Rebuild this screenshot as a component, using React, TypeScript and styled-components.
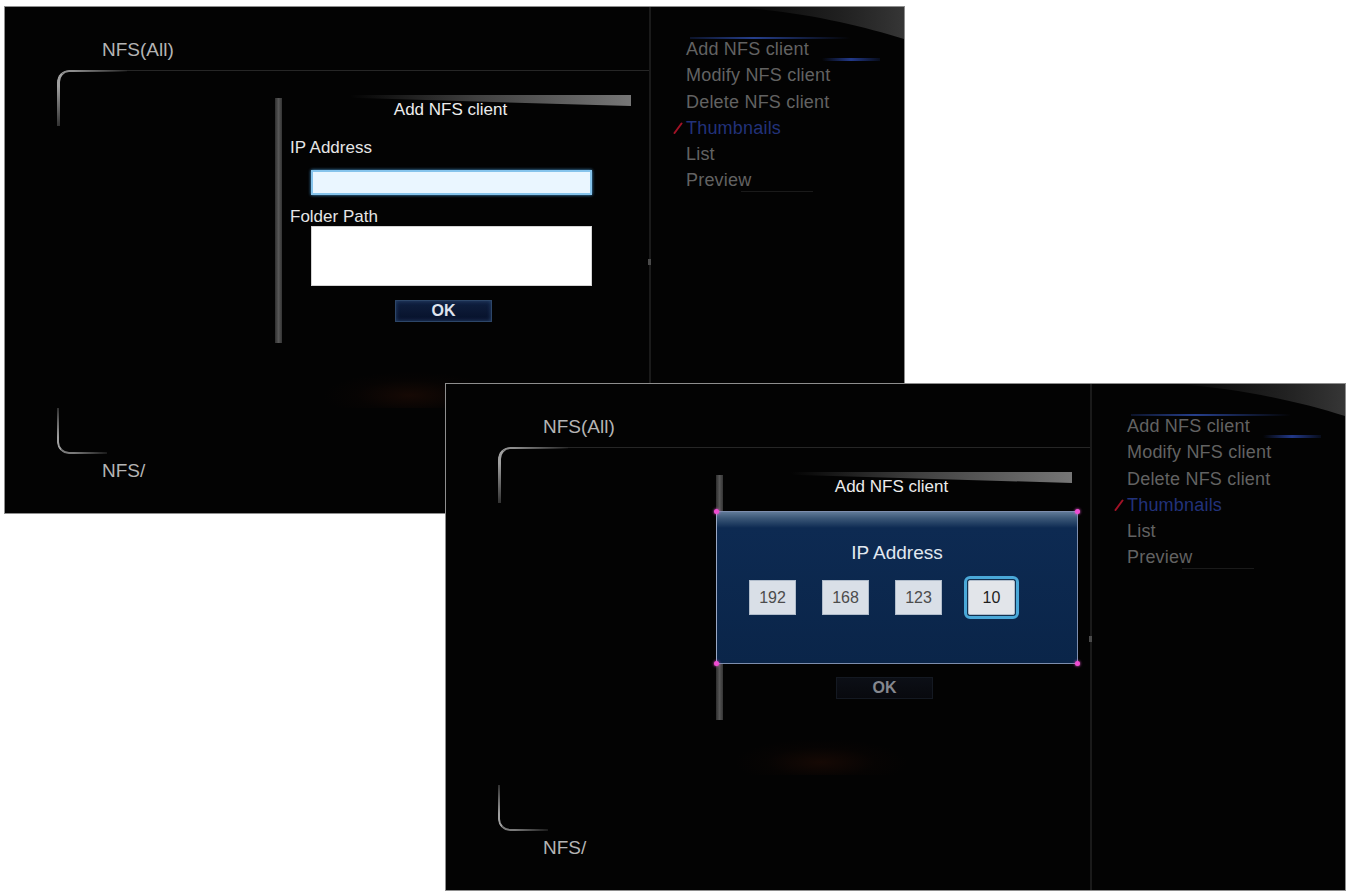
import React from 'react';
import styled, { createGlobalStyle } from 'styled-components';

const GlobalStyle = createGlobalStyle`
  html, body {
    margin: 0;
    background: #ffffff;
  }
  body {
    width: 1351px;
    height: 893px;
    overflow: hidden;
    font-family: "Liberation Sans", Arial, sans-serif;
  }
`;

const Stage = styled.div`
  position: relative;
  width: 1351px;
  height: 893px;
`;

// each screenshot is a window laid on the white canvas
const Shot = styled.div<{ $x: number; $y: number }>`
  position: absolute;
  left: ${(p) => p.$x}px;
  top: ${(p) => p.$y}px;
  width: 901px;
  height: 508px;
  box-sizing: border-box;
  border: 1px solid #8e8e8e;
  background: #030303;
  display: flex;
  overflow: hidden;
`;

const LeftPane = styled.div`
  position: relative;
  width: 644px;
  flex: none;
  padding-top: 32px;
  box-sizing: border-box;
`;

const PathLabel = styled.div`
  padding-left: 97px;
  font-size: 19px;
  line-height: 22px;
  color: #b4b4b4;
`;

const Frame = styled.div`
  position: relative;
  margin: 9px 0 6px 52px;
  height: 384px;
  box-sizing: border-box;
  border-top: 1px solid #262626;
  border-top-left-radius: 12px;
  padding: 24px 0 0 218px;
`;

// bright bevel that shows only at the left corners of the frame
const FrameCorner = styled.span<{ $edge: 'top' | 'bottom' }>`
  position: absolute;
  left: 0;
  ${(p) => (p.$edge === 'top' ? 'top: -1px;' : 'bottom: 0;')}
  width: ${(p) => (p.$edge === 'top' ? 70 : 50)}px;
  height: ${(p) => (p.$edge === 'top' ? 56 : 46)}px;
  box-sizing: border-box;
  border-left: ${(p) => (p.$edge === 'top' ? 3 : 2)}px solid #a0a0a0;
  ${(p) =>
    p.$edge === 'top'
      ? 'border-top: 2px solid #8e8e8e; border-top-left-radius: 12px;'
      : 'border-bottom: 2px solid #7a7a7a; border-bottom-left-radius: 12px;'}
  -webkit-mask-image: ${(p) =>
    p.$edge === 'top'
      ? 'radial-gradient(circle at 0 0, #000 18%, transparent 82%)'
      : 'radial-gradient(circle at 0 100%, #000 25%, transparent 85%)'};
  mask-image: ${(p) =>
    p.$edge === 'top'
      ? 'radial-gradient(circle at 0 0, #000 18%, transparent 82%)'
      : 'radial-gradient(circle at 0 100%, #000 25%, transparent 85%)'};
`;

const Glow = styled.div<{ $x: number; $y: number }>`
  position: absolute;
  left: ${(p) => p.$x}px;
  top: ${(p) => p.$y}px;
  width: 170px;
  height: 36px;
  background: radial-gradient(ellipse at 50% 65%, rgba(70, 24, 8, 0.28), rgba(30, 10, 4, 0.12) 45%, transparent 72%);
  pointer-events: none;
`;

const Dialog = styled.div`
  display: flex;
  width: 356px;
`;

const DialogRail = styled.div`
  width: 7px;
  height: 245px;
  margin-top: 3px;
  flex: none;
  background: linear-gradient(to right, #2e2e2e, #565656 50%, #343434);
`;

const DialogBody = styled.div`
  flex: 1;
  display: flex;
  flex-direction: column;
  padding-left: 8px;
`;

const DialogHeader = styled.div`
  position: relative;
  height: 30px;
  line-height: 30px;
  text-align: center;
  padding-right: 20px;
  font-size: 17px;
  color: #ececec;

  &::before {
    content: '';
    position: absolute;
    top: 0;
    left: 60px;
    right: 0;
    height: 11px;
    background: linear-gradient(to right, rgba(90, 90, 90, 0), #404040 45%, #767676);
    clip-path: polygon(0 0, 100% 0, 100% 100%, 0 25%);
  }
`;

const FieldLabel = styled.div<{ $gap: number; $covered: boolean }>`
  margin-top: ${(p) => p.$gap}px;
  font-size: 17px;
  line-height: 18px;
  color: #e6e6e6;
  visibility: ${(p) => (p.$covered ? 'hidden' : 'visible')};
`;

const IpInput = styled.div<{ $focused: boolean }>`
  margin: 13px 0 0 21px;
  width: 281px;
  height: 25px;
  box-sizing: border-box;
  background: ${(p) => (p.$focused ? '#eaf6ff' : '#ffffff')};
  border: 2px solid ${(p) => (p.$focused ? '#86c4ec' : '#d8d8d8')};
  box-shadow: ${(p) => (p.$focused ? '0 0 3px #4a9fdc' : 'none')};
`;

const PathInput = styled.div`
  margin: 0 0 0 21px;
  width: 281px;
  height: 60px;
  background: #ffffff;
  border: 1px solid #d4d4d4;
  box-sizing: border-box;
`;

const OkButton = styled.div<{ $focused: boolean }>`
  margin: 14px 0 0 105px;
  width: 97px;
  height: 22px;
  box-sizing: border-box;
  text-align: center;
  font-size: 16px;
  font-weight: bold;
  line-height: 20px;
  color: ${(p) => (p.$focused ? '#dfe3ee' : '#85888f')};
  background: ${(p) =>
    p.$focused ? 'linear-gradient(#0f1f3e, #07112a)' : 'linear-gradient(#0c0f16, #08090e)'};
  border: 1px solid ${(p) => (p.$focused ? '#2d4668' : '#141922')};
  box-shadow: ${(p) => (p.$focused ? 'inset 0 0 4px #28446e' : 'none')};
`;

const Divider = styled.div`
  position: relative;
  width: 2px;
  flex: none;
  background: #1a1a1a;

  &::after {
    content: '';
    position: absolute;
    left: -1px;
    top: 252px;
    width: 3px;
    height: 6px;
    background: #4a4a4a;
  }
`;

const Menu = styled.ul`
  list-style: none;
  margin: 0;
  padding: 29px 0 0 35px;
  display: flex;
  flex-direction: column;
`;

const MenuItem = styled.li<{ $active?: boolean; $selected?: boolean; $underline?: boolean }>`
  position: relative;
  width: 196px;
  height: 26.3px;
  line-height: 26px;
  font-size: 18px;
  letter-spacing: 0.2px;
  color: ${(p) => (p.$selected ? '#22327a' : '#626262')};

  ${(p) =>
    p.$active &&
    `
    &::before {
      content: '';
      position: absolute;
      top: 1px;
      left: 4px;
      width: 160px;
      height: 2px;
      background: linear-gradient(to right, rgba(40,70,160,0.25), #263f8c 40%, rgba(40,70,160,0));
    }
    &::after {
      content: '';
      position: absolute;
      top: 22px;
      left: 136px;
      width: 58px;
      height: 3px;
      background: linear-gradient(to right, rgba(30,60,150,0), #22398a 50%, rgba(30,60,150,0.15));
    }
  `}

  ${(p) =>
    p.$underline &&
    `
    &::after {
      content: '';
      position: absolute;
      top: 24px;
      left: 55px;
      width: 72px;
      height: 1px;
      background: #1a1a1a;
    }
  `}
`;

const Tick = styled.svg`
  position: absolute;
  left: -13px;
  top: 7px;
`;

const Swoosh = styled.svg`
  position: absolute;
  top: 0;
  right: 0;
`;

const IpPopup = styled.div`
  position: absolute;
  left: 270px;
  top: 127px;
  width: 362px;
  height: 153px;
  box-sizing: border-box;
  border: 1px solid #7d8eae;
  border-left-color: #9aa8c4;
  background: linear-gradient(#607a98 0, #3c5878 6px, #0d2a52 16px, #0a2549 100%);
  display: flex;
  flex-direction: column;
  align-items: center;
`;

const CornerDot = styled.span<{ $v: 'top' | 'bottom'; $h: 'left' | 'right' }>`
  position: absolute;
  ${(p) => p.$v}: -3px;
  ${(p) => p.$h}: -3px;
  width: 5px;
  height: 5px;
  border-radius: 50%;
  background: #f04cd2;
  box-shadow: 0 0 3px #ff5ee0;
`;

const PopupTitle = styled.div`
  margin-top: 30px;
  font-size: 19px;
  line-height: 22px;
  color: #e2e8f0;
`;

const OctetRow = styled.div`
  align-self: flex-start;
  display: flex;
  gap: 26px;
  margin: 16px 0 0 32px;
`;

const Octet = styled.div<{ $focused?: boolean }>`
  width: 47px;
  height: 35px;
  box-sizing: border-box;
  display: flex;
  align-items: center;
  justify-content: center;
  font-size: 16px;
  color: ${(p) => (p.$focused ? '#1e1e1e' : '#4c4c4c')};
  background: ${(p) => (p.$focused ? '#e2e5ea' : '#d9dfe7')};
  border: 1px solid #b0bccb;
  ${(p) =>
    p.$focused &&
    `
    outline: 3px solid #4aa8d8;
    outline-offset: 1px;
    border-radius: 2px;
    box-shadow: 0 0 0 1px #12304f;
  `}
`;

const menuItems = [
  'Add NFS client',
  'Modify NFS client',
  'Delete NFS client',
  'Thumbnails',
  'List',
  'Preview',
];

const octets = ['192', '168', '123', '10'];

const Screen = ({ x, y, popup }: { x: number; y: number; popup: boolean }) => (
  <Shot $x={x} $y={y}>
    <LeftPane>
      <PathLabel>NFS(All)</PathLabel>
      <Frame>
        <FrameCorner $edge="top" />
        <FrameCorner $edge="bottom" />
        <Dialog>
          <DialogRail />
          <DialogBody>
            <DialogHeader>Add NFS client</DialogHeader>
            {/* the IP popup covers these fields in the second shot */}
            <FieldLabel $gap={14} $covered={popup}>IP Address</FieldLabel>
            <IpInput $focused={!popup} />
            <FieldLabel $gap={13} $covered={popup}>Folder Path</FieldLabel>
            <PathInput />
            <OkButton $focused={!popup}>OK</OkButton>
          </DialogBody>
        </Dialog>
      </Frame>
      <PathLabel>NFS/</PathLabel>
      <Glow $x={popup ? 290 : 320} $y={popup ? 355 : 365} />
    </LeftPane>
    <Divider />
    <Menu>
      {menuItems.map((item, idx) => (
        <MenuItem key={item} $active={idx === 0} $selected={item === 'Thumbnails'} $underline={item === 'Preview'}>
          {item === 'Thumbnails' && (
            <Tick width="10" height="12" viewBox="0 0 10 12">
              <path d="M1.5 11 L8.5 1.5" stroke="#a01226" strokeWidth="2" strokeLinecap="round" />
            </Tick>
          )}
          {item}
        </MenuItem>
      ))}
    </Menu>
    <Swoosh width="170" height="40" viewBox="0 0 170 40">
      <defs>
        <linearGradient id={`sw${x}`} x1="0" y1="0" x2="1" y2="0">
          <stop offset="0" stopColor="#2a2a2a" stopOpacity="0" />
          <stop offset="0.6" stopColor="#262626" stopOpacity="0.8" />
          <stop offset="1" stopColor="#363636" />
        </linearGradient>
      </defs>
      <path d="M0 0 L170 0 L170 32 C125 18 70 5 0 0 Z" fill={`url(#sw${x})`} />
    </Swoosh>
    {popup && (
      <IpPopup>
        <CornerDot $v="top" $h="left" />
        <CornerDot $v="top" $h="right" />
        <CornerDot $v="bottom" $h="left" />
        <CornerDot $v="bottom" $h="right" />
        <PopupTitle>IP Address</PopupTitle>
        <OctetRow>
          {octets.map((o, idx) => (
            <Octet key={o} $focused={idx === octets.length - 1}>
              {o}
            </Octet>
          ))}
        </OctetRow>
      </IpPopup>
    )}
  </Shot>
);

export default function App() {
  return (
    <>
      <GlobalStyle />
      <Stage>
        <Screen x={4} y={6} popup={false} />
        <Screen x={445} y={383} popup />
      </Stage>
    </>
  );
}
